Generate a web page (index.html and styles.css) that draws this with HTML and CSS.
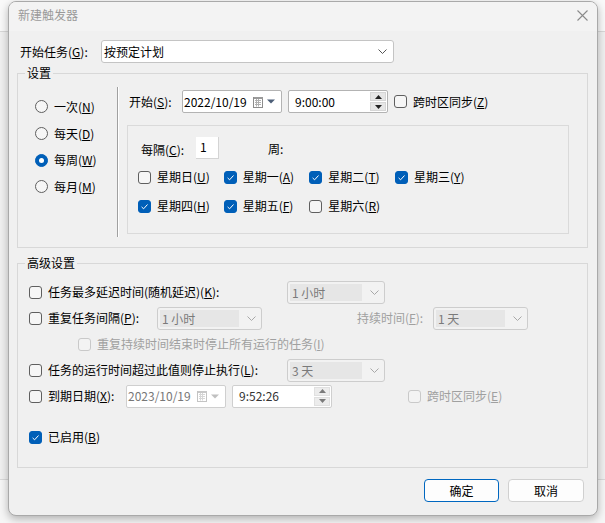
FILE: index.html
```html
<!DOCTYPE html>
<html lang="zh-CN">
<head>
<meta charset="utf-8">
<title>新建触发器</title>
<link rel="stylesheet" href="styles.css">
</head>
<body>
<div class="dialog">
  <div class="titlebar">
    <span class="title">新建触发器</span>
    <svg class="close" width="11" height="11" viewBox="0 0 11 11"><path d="M0.5 0.5L10.5 10.5M10.5 0.5L0.5 10.5" stroke="#8a8a8a" stroke-width="1.1"/></svg>
  </div>
  <div class="content">
    <div class="begin-row">
      <span class="begin-label">开始任务(<u>G</u>):</span>
      <div class="combo main-combo">
        <span class="val">按预定计划</span>
        <svg class="chev" width="9" height="5" viewBox="0 0 9 5"><path d="M0.5 0.5L4.5 4.5L8.5 0.5" fill="none" stroke="#555" stroke-width="1"/></svg>
      </div>
    </div>

    <fieldset class="group settings">
      <legend>设置</legend>
      <div class="settings-body">
        <div class="radios">
          <div class="radio-row"><span class="radio"></span><span>一次(<u>N</u>)</span></div>
          <div class="radio-row"><span class="radio"></span><span>每天(<u>D</u>)</span></div>
          <div class="radio-row"><span class="radio on"></span><span>每周(<u>W</u>)</span></div>
          <div class="radio-row"><span class="radio"></span><span>每月(<u>M</u>)</span></div>
        </div>
        <div class="sep"></div>
        <div class="schedule">
          <div class="start-row">
            <span class="start-label">开始(<u>S</u>):</span>
            <div class="picker date">
              <span class="pv">2022/10/19</span>
              <svg class="cal" width="11" height="12" viewBox="0 0 11 12"><rect x="0.5" y="1.5" width="9" height="10" fill="#fff" stroke="#8c8c8c"/><path d="M2 4.5h6M2 6.5h6M2 8.5h6M3.5 3v7.5M5.5 3v7.5" stroke="#b0b0b0" stroke-width="1"/><rect x="1" y="1" width="9" height="2" fill="#9a9a9a"/></svg>
              <svg class="tri" width="8" height="5" viewBox="0 0 8 5"><path d="M0 0.5H8L4 4.5Z" fill="#4d5f78"/></svg>
            </div>
            <div class="picker time">
              <span class="pv">9:00:00</span>
              <div class="spin">
                <span class="sb"><svg width="7" height="4" viewBox="0 0 7 4"><path d="M0 4H7L3.5 0Z" fill="#222"/></svg></span>
                <span class="sb"><svg width="7" height="4" viewBox="0 0 7 4"><path d="M0 0H7L3.5 4Z" fill="#222"/></svg></span>
              </div>
            </div>
            <span class="check start-check"></span><span class="cl">跨时区同步(<u>Z</u>)</span>
          </div>
          <div class="weekly">
            <div class="every-row">
              <span class="every-label">每隔(<u>C</u>):</span>
              <span class="num">1</span>
              <span class="week">周:</span>
            </div>
            <div class="days">
              <div class="day"><span class="check"></span><span>星期日(<u>U</u>)</span></div>
              <div class="day"><span class="check on"><svg viewBox="0 0 13 13"><path d="M3.6 6.9l2 1.9 3.9-4.3" fill="none" stroke="#fff" stroke-width="1"/></svg></span><span>星期一(<u>A</u>)</span></div>
              <div class="day"><span class="check on"><svg viewBox="0 0 13 13"><path d="M3.6 6.9l2 1.9 3.9-4.3" fill="none" stroke="#fff" stroke-width="1"/></svg></span><span>星期二(<u>T</u>)</span></div>
              <div class="day"><span class="check on"><svg viewBox="0 0 13 13"><path d="M3.6 6.9l2 1.9 3.9-4.3" fill="none" stroke="#fff" stroke-width="1"/></svg></span><span>星期三(<u>Y</u>)</span></div>
              <div class="day"><span class="check on"><svg viewBox="0 0 13 13"><path d="M3.6 6.9l2 1.9 3.9-4.3" fill="none" stroke="#fff" stroke-width="1"/></svg></span><span>星期四(<u>H</u>)</span></div>
              <div class="day"><span class="check on"><svg viewBox="0 0 13 13"><path d="M3.6 6.9l2 1.9 3.9-4.3" fill="none" stroke="#fff" stroke-width="1"/></svg></span><span>星期五(<u>F</u>)</span></div>
              <div class="day"><span class="check"></span><span>星期六(<u>R</u>)</span></div>
            </div>
          </div>
        </div>
      </div>
    </fieldset>

    <fieldset class="group advanced">
      <legend>高级设置</legend>
      <div class="adv-body">
        <div class="adv-row">
          <span class="check"></span>
          <span class="lbl w-long">任务最多延迟时间(随机延迟)(<u>K</u>):</span>
          <div class="combo disabled w98"><span class="val">1 小时</span><svg class="chev" width="9" height="5" viewBox="0 0 9 5"><path d="M0.5 0.5L4.5 4.5L8.5 0.5" fill="none" stroke="#a8a8a8" stroke-width="1"/></svg></div>
        </div>
        <div class="adv-row">
          <span class="check"></span>
          <span class="lbl w-rep">重复任务间隔(<u>P</u>):</span>
          <div class="combo disabled w105"><span class="val">1 小时</span><svg class="chev" width="9" height="5" viewBox="0 0 9 5"><path d="M0.5 0.5L4.5 4.5L8.5 0.5" fill="none" stroke="#a8a8a8" stroke-width="1"/></svg></div>
          <span class="lbl dim dur">持续时间(<u>F</u>):</span>
          <div class="combo disabled w95"><span class="val">1 天</span><svg class="chev" width="9" height="5" viewBox="0 0 9 5"><path d="M0.5 0.5L4.5 4.5L8.5 0.5" fill="none" stroke="#a8a8a8" stroke-width="1"/></svg></div>
        </div>
        <div class="adv-row indent">
          <span class="check off"></span>
          <span class="lbl dim">重复持续时间结束时停止所有运行的任务(<u>I</u>)</span>
        </div>
        <div class="adv-row">
          <span class="check"></span>
          <span class="lbl w-long">任务的运行时间超过此值则停止执行(<u>L</u>):</span>
          <div class="combo disabled w98"><span class="val">3 天</span><svg class="chev" width="9" height="5" viewBox="0 0 9 5"><path d="M0.5 0.5L4.5 4.5L8.5 0.5" fill="none" stroke="#a8a8a8" stroke-width="1"/></svg></div>
        </div>
        <div class="adv-row">
          <span class="check"></span>
          <span class="lbl w-exp">到期日期(<u>X</u>):</span>
          <div class="picker date dis">
            <span class="pv">2023/10/19</span>
            <svg class="cal" width="11" height="12" viewBox="0 0 11 12"><rect x="0.5" y="1.5" width="9" height="10" fill="#fff" stroke="#c4c4c4"/><path d="M2 4.5h6M2 6.5h6M2 8.5h6M3.5 3v7.5M5.5 3v7.5" stroke="#d6d6d6" stroke-width="1"/><rect x="1" y="1" width="9" height="2" fill="#c8c8c8"/></svg>
            <svg class="tri" width="8" height="5" viewBox="0 0 8 5"><path d="M0 0.5H8L4 4.5Z" fill="#c0c0c0"/></svg>
          </div>
          <div class="picker time dis">
            <span class="pv">9:52:26</span>
            <div class="spin">
              <span class="sb"><svg width="7" height="4" viewBox="0 0 7 4"><path d="M0 4H7L3.5 0Z" fill="#7a7a7a"/></svg></span>
              <span class="sb"><svg width="7" height="4" viewBox="0 0 7 4"><path d="M0 0H7L3.5 4Z" fill="#7a7a7a"/></svg></span>
            </div>
          </div>
          <span class="check off exp-check"></span>
          <span class="lbl dim">跨时区同步(<u>E</u>)</span>
        </div>
        <div class="adv-row enabled-row">
          <span class="check on"><svg viewBox="0 0 13 13"><path d="M3.6 6.9l2 1.9 3.9-4.3" fill="none" stroke="#fff" stroke-width="1"/></svg></span>
          <span class="lbl">已启用(<u>B</u>)</span>
        </div>
      </div>
    </fieldset>

    <div class="buttons">
      <button class="btn primary">确定</button>
      <button class="btn">取消</button>
    </div>
  </div>
</div>
</body>
</html>
```

FILE: styles.css
```css
* { box-sizing: border-box; }

body {
  margin: 0;
  width: 605px;
  height: 523px;
  overflow: hidden;
  font-family: "Noto Sans CJK SC", "Noto Sans", sans-serif;
  font-size: 12px;
  line-height: 16px;
  color: #000;
  background: linear-gradient(#f9f9f9 0 31px, #d8d8d8 31px 32px, #f0f0f0 32px 479px, #d9d9d9 479px 480px, #f6f6f6 480px);
}

u { text-decoration: underline; text-underline-offset: 1px; text-decoration-thickness: 1px; }

.dialog {
  width: 590px;
  height: 515px;
  margin: 1px 0 0 8px;
  border: 1px solid #a9a9a9;
  border-radius: 8px;
  background: #f0f0f0;
  overflow: hidden;
  box-shadow: 0 3px 8px rgba(0, 0, 0, 0.28);
  display: flex;
  flex-direction: column;
}

.titlebar {
  height: 29px;
  flex: none;
  background: #f3f3f3;
  display: flex;
  align-items: center;
  justify-content: space-between;
  padding: 0 9px 3px 9px;
}
.title { color: #9a9a9a; }
.close { display: block; }

.content { flex: 1; }

.begin-row {
  margin-top: 9px;
  height: 23px;
  display: flex;
  align-items: center;
  padding-left: 11px;
}
.begin-label { width: 81px; }

.combo {
  height: 23px;
  border: 1px solid #c4c4c4;
  border-radius: 3px;
  background: #fff;
  display: flex;
  align-items: center;
  justify-content: space-between;
  padding-left: 2px;
}
.main-combo { width: 293px; }
.combo .chev { margin-right: 6px; flex: none; }

.combo.disabled {
  background: #f2f2f2;
  border-color: #cdcdcd;
  padding: 2px 0 2px 2px;
  align-items: stretch;
}
.combo.disabled .val {
  flex: 1;
  background: #e6e6e6;
  color: #7a7a7a;
  padding-left: 2px;
  line-height: 17px;
  margin-right: 8px;
}
.combo.disabled .chev { align-self: center; margin-right: 5px; }
.w98 { width: 98px; }
.w105 { width: 105px; }
.w95 { width: 95px; }

.group {
  margin: 2px 0 0 8px;
  width: 571px;
  padding: 0;
  border: 1px solid #d8d8d8;
  min-width: 0;
}
.group legend {
  margin-left: 7px;
  padding: 0 2px;
  line-height: 16px;
}

.settings-body {
  height: 166px;
  display: flex;
}
.radios {
  width: 99px;
  flex: none;
  padding: 12.5px 0 0 17px;
}
.radio-row {
  height: 26.7px;
  display: flex;
  align-items: center;
  gap: 6px;
}
.radio {
  width: 13px;
  height: 13px;
  border-radius: 50%;
  border: 1px solid #5f5f5f;
  background: #f6f6f6;
  flex: none;
  display: flex;
  align-items: center;
  justify-content: center;
}
.radio.on { background: #005fb8; border-color: #005fb8; }
.radio.on::after {
  content: "";
  width: 5px;
  height: 5px;
  border-radius: 50%;
  background: #fff;
}

.sep {
  width: 2px;
  height: 150px;
  margin-top: 6px;
  flex: none;
  border-left: 1px solid #a0a0a0;
  border-right: 1px solid #ffffff;
}

.schedule { padding-left: 8px; }

.start-row {
  margin-top: 9px;
  height: 23px;
  display: flex;
  align-items: center;
}
.start-label { width: 53px; margin-left: 2px; }

.picker {
  height: 23px;
  width: 100px;
  border: 1px solid #b3b3b3;
  border-radius: 2px;
  background: #fff;
  display: flex;
  align-items: center;
}
.picker.date { padding-left: 1px; }
.picker.date .pv { flex: 1; }
.picker .cal { flex: none; margin-right: 3px; }
.picker .tri { flex: none; margin-right: 6px; }
.picker.time { margin-left: 6px; padding-left: 6px; }
.picker.time .pv { flex: 1; }
.spin {
  width: 16px;
  height: 19px;
  margin-right: 1px;
  display: flex;
  flex-direction: column;
  gap: 1px;
}
.sb {
  flex: 1;
  background: #e6e6e6;
  border: 1px solid #d6d6d6;
  display: flex;
  align-items: center;
  justify-content: center;
}
.sb svg { display: block; }
.picker.dis { border-color: #cfcfcf; }
.picker.date.dis .pv { color: #777; }
.picker.time.dis .pv { color: #333; }
.picker.dis .sb { background: #ececec; border-color: #e0e0e0; }

.check {
  width: 13px;
  height: 13px;
  border: 1px solid #5f5f5f;
  border-radius: 3px;
  background: #f6f6f6;
  flex: none;
  display: block;
}
.check svg { display: block; width: 13px; height: 13px; margin: -1px; }
.check.on { background: #005fb8; border-color: #005fb8; }
.check.off { border-color: #c9c9c9; background: #f3f3f3; }
.start-check { margin-left: 6px; }
.cl { margin-left: 6px; }

.weekly {
  margin-top: 12px;
  width: 442px;
  height: 109px;
  border: 1px solid #dadada;
}
.every-row {
  margin-top: 11px;
  height: 22px;
  display: flex;
  align-items: center;
  padding-left: 13px;
}
.every-label { width: 55px; margin-top: 4px; }
.num {
  width: 23px;
  height: 22px;
  background: #fff;
  border-right: 1px solid #d4d4d4;
  border-bottom: 1px solid #d4d4d4;
  padding: 2px 0 0 4px;
}
.week { margin-left: 49px; margin-top: 2px; }

.days {
  margin-top: 10px;
  padding-left: 10px;
  display: grid;
  grid-template-columns: repeat(4, 85.67px);
  row-gap: 13px;
}
.day {
  height: 16px;
  display: flex;
  align-items: center;
  gap: 6px;
}

.advanced { margin-top: 7px; }
.adv-body {
  height: 196px;
  padding: 8px 0 0 11px;
}
.adv-row {
  height: 26px;
  display: flex;
  align-items: center;
}
.adv-row .lbl { margin-left: 6px; white-space: nowrap; }
.adv-row .lbl.w-long { width: 239px; flex: none; }
.adv-row .lbl.w-rep { width: 109px; flex: none; }
.adv-row .lbl.w-exp { width: 78px; flex: none; }
.adv-row .lbl.dur { margin-left: 95px; width: 76px; flex: none; }
.dim { color: #a0a0a0; }
.adv-row.indent { padding-left: 49px; }
.exp-check { margin-left: 76px; }
.enabled-row { margin-top: 15px; }

.buttons {
  margin-top: 11px;
  display: flex;
  justify-content: flex-end;
  gap: 9px;
  padding-right: 13px;
}
.btn {
  width: 76px;
  height: 23px;
  font: inherit;
  color: #000;
  background: #fdfdfd;
  border: 1px solid #d0d0d0;
  border-radius: 4px;
  padding: 0;
}
.btn.primary {
  width: 75px;
  border-color: #0067c0;
}
```
